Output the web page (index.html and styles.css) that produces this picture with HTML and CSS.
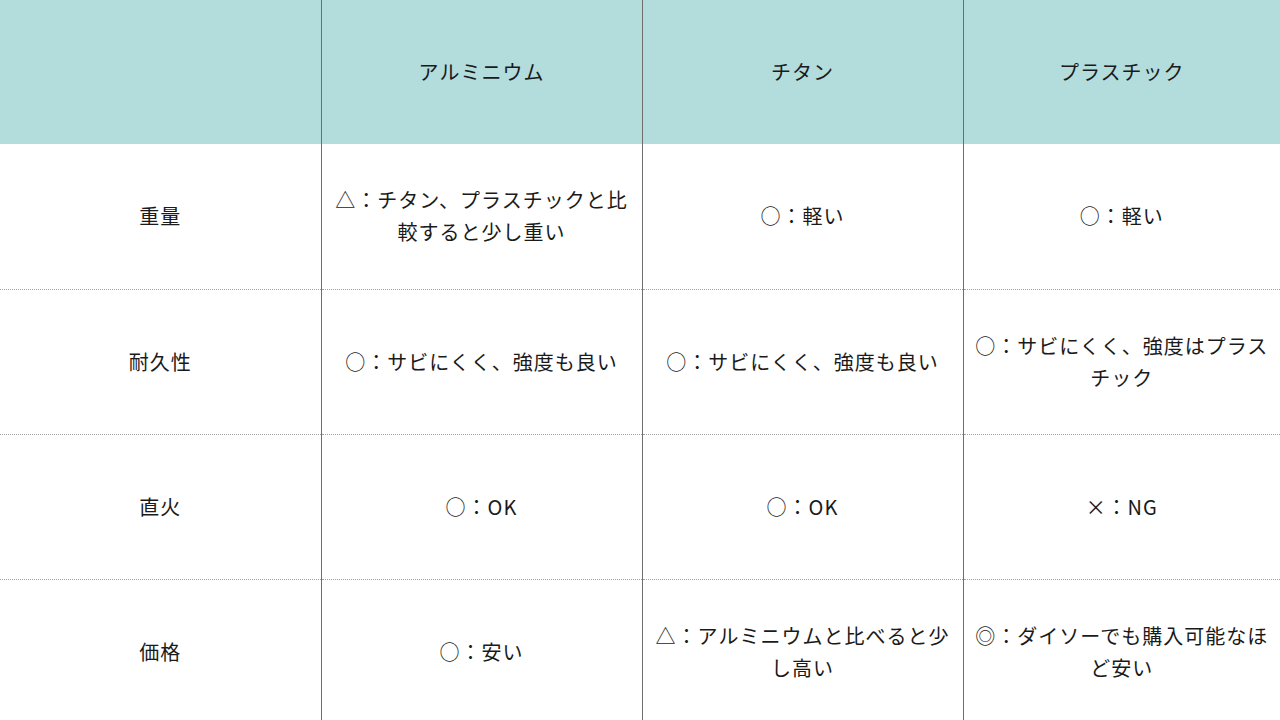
FILE: index.html
```html
<!DOCTYPE html>
<html lang="ja">
<head>
<meta charset="utf-8">
<link rel="stylesheet" href="styles.css">
</head>
<body>
<table class="cmp">
  <colgroup>
    <col class="c1"><col class="c2"><col class="c3"><col class="c4">
  </colgroup>
  <thead>
    <tr>
      <th></th>
      <th>アルミニウム</th>
      <th>チタン</th>
      <th>プラスチック</th>
    </tr>
  </thead>
  <tbody>
    <tr>
      <td>重量</td>
      <td>△：チタン、プラスチックと比較すると少し重い</td>
      <td>○：軽い</td>
      <td>○：軽い</td>
    </tr>
    <tr>
      <td>耐久性</td>
      <td>○：サビにくく、強度も良い</td>
      <td>○：サビにくく、強度も良い</td>
      <td>○：サビにくく、強度はプラスチック</td>
    </tr>
    <tr>
      <td>直火</td>
      <td>○：OK</td>
      <td>○：OK</td>
      <td>×：NG</td>
    </tr>
    <tr>
      <td>価格</td>
      <td>○：安い</td>
      <td>△：アルミニウムと比べると少し高い</td>
      <td>◎：ダイソーでも購入可能なほど安い</td>
    </tr>
  </tbody>
</table>
</body>
</html>
```
FILE: styles.css
```css
html, body {
  margin: 0;
  padding: 0;
  background: #ffffff;
}
body {
  font-family: "Noto Sans CJK JP", "Noto Sans", sans-serif;
  color: #1a1a1a;
  overflow: hidden;
}
.cmp {
  width: 1280px;
  border-collapse: collapse;
  table-layout: fixed;
}
.c1, .c2, .c3 { width: 321px; }
.c4 { width: 317px; }
.cmp th, .cmp td {
  font-size: 20px;
  font-weight: normal;
  letter-spacing: 1px;
  line-height: 32px;
  text-align: center;
  vertical-align: middle;
  padding: 0 10px;
  border-left: 1px solid #6e6e6e;
}
.cmp th:first-child, .cmp td:first-child {
  border-left: none;
}
.cmp thead th {
  background: #b3dcdc;
  height: 144px;
  box-sizing: border-box;
}
.cmp tbody td {
  height: 145px;
  box-sizing: border-box;
  border-top: 1px dotted #a0a0a0;
}
.cmp tbody tr:first-child td {
  border-top: none;
}
```
